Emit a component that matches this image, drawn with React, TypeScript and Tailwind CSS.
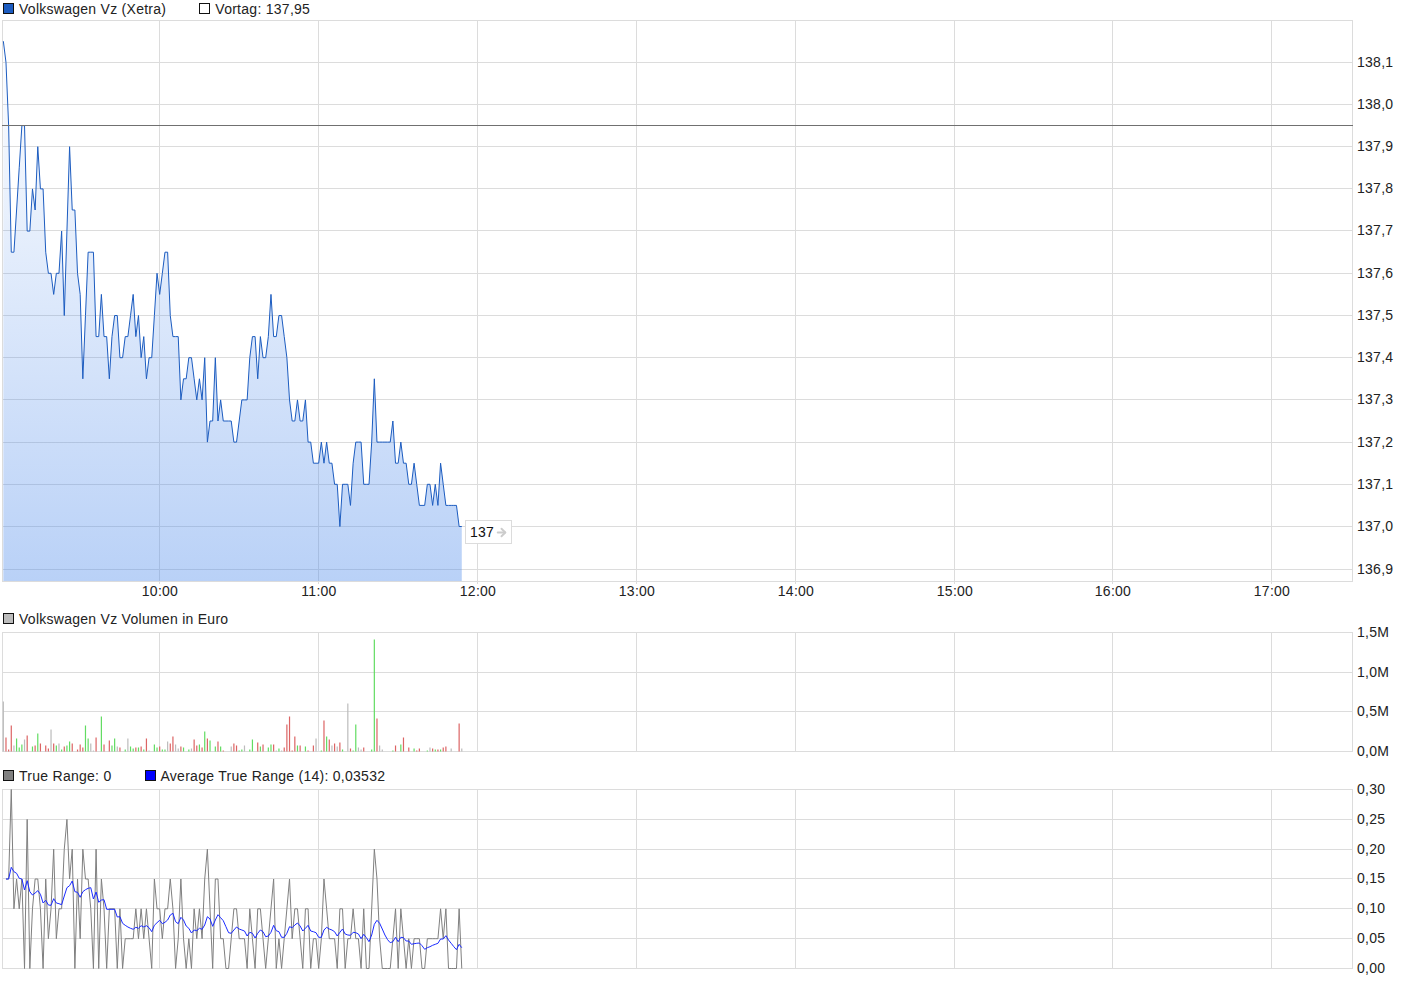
import { ArrowRight } from 'lucide-react'

const GRID_X = [159, 318, 477, 636, 795, 954, 1112, 1271]
const HOURS = ['10:00', '11:00', '12:00', '13:00', '14:00', '15:00', '16:00', '17:00']
const LEFT = 2
const RIGHT = 1352

// one sample per minute, 2.65px apart
const xAt = (i: number) => 3.33 + 2.65 * i

// price in steps of 0.05 above 137,00
const PRICE = [
  23, 22, 19, 13, 13, 15, 17, 19, 19, 14, 14, 16, 15, 18, 16, 16, 13, 12, 12, 11,
  12, 12, 14, 10, 14, 18, 15, 15, 12, 11, 7, 10, 13, 13, 13, 9, 9, 11, 9, 9,
  7, 9, 10, 10, 8, 8, 9, 9, 10, 11, 9, 10, 8, 9, 7, 8, 8, 10, 12, 11,
  12, 13, 13, 10, 9, 9, 9, 6, 7, 7, 8, 8, 7, 6, 7, 6, 8, 4, 5, 5,
  8, 5, 6, 5, 5, 5, 5, 4, 4, 5, 6, 6, 6, 8, 9, 9, 7, 9, 8, 8,
  9, 11, 9, 9, 10, 10, 9, 8, 6, 5, 5, 6, 5, 5, 6, 4, 4, 3, 3, 3,
  4, 3, 4, 3, 3, 2, 2, 0, 2, 2, 2, 1, 3, 4, 4, 4, 2, 2, 2, 4,
  7, 4, 4, 4, 4, 4, 4, 5, 3, 3, 4, 3, 3, 2, 2, 3, 2, 1, 1, 1,
  2, 2, 1, 2, 1, 3, 2, 1, 1, 1, 1, 1, 0, 0,
]

// bar height in px + colour key, 0 = no trade
const VOLUME =
  '50s 14r 2r 26r 6s 13g 4g 7g 12s 16r 0 5g 6r 18g 8r 0 6r 3r 22s 8r 6g 8s 2g 5r 6g 10g 8r 0 2r 7r 4r 26g 13g 8s 1s 14r 0 35g 7r 0 11r 6g 13g 5s 4r 0 2g 13s 5g 3g 4r 4g 5r 2g 13r 1s 0 7g 4g 5r 2g 2g 10s 8r 15r 7s 3s 5r 4g 0 2g 3s 12r 6r 7g 4r 20g 13r 11g 0 5g 10r 5g 1r 0 0 5s 8r 6r 1g ' +
  '2g 6s 0 2g 12g 0 9r 5g 7r 0 4g 7g 7r 1s 3g 1s 4r 27r 35r 1r 15r 6g 6r 0 5g 1r 0 6r 13s 0 1g 31r 15g 12r 6s 8r 5s 9r 2g 0 48s 3r 1g 27g 4s 2s 4r 0 0 2g 112g 33r 6s 2s 0 0 0 1g 6r 0 7g 14r 0 4r 0 3g 1r 3r 0 0 1g 4s 3r 2g 2r 2g 4r 5r 0 3s 0 0 28r 3s'

const BAR_COLORS: Record<string, string> = { r: '#dc6464', g: '#62dc62', s: '#bcbcbc' }

// true range in steps of 0.05, starts at the second sample
const TRUE_RANGE = [
  3, 3, 6, 2, 3, 2, 3, 0, 5, 0, 2, 3, 3, 2, 0, 3, 1, 2, 4, 1, 2, 2, 4, 5, 3, 4, 0, 3, 1, 4,
  3, 3, 2, 0, 4, 0, 3, 2, 0, 2, 2, 2, 0, 2, 0, 1, 1, 1, 1, 2, 1, 2, 1, 2, 1, 0, 3, 2, 2, 1,
  2, 2, 3, 2, 0, 1, 3, 1, 0, 1, 0, 2, 1, 2, 1, 3, 4, 2, 0, 3, 3, 1, 1, 0, 0, 1, 2, 2, 1, 1,
  1, 0, 2, 1, 0, 2, 2, 1, 0, 1, 2, 3, 0, 1, 0, 1, 2, 3, 1, 2, 2, 1, 0, 2, 2, 0, 1, 1, 0, 1,
  3, 2, 1, 1, 1, 0, 2, 2, 0, 1, 1, 2, 1, 1, 0, 2, 0, 0, 2, 4, 3, 1, 0, 0, 0, 0, 1, 2, 0, 2,
  1, 0, 1, 0, 1, 1, 1, 0, 0, 1, 1, 1, 1, 1, 2, 1, 2, 0, 0, 0, 0, 2, 0,
]

// average true range as page y, starts at the second sample
const ATR = [
  342, 342, 307, 320, 325, 340, 342, 375, 347, 380, 390, 384, 377, 388, 414, 406, 420, 421, 401, 414,
  416, 419, 393, 368, 362, 348, 380, 382, 397, 380, 374, 370, 368, 402, 381, 412, 405, 404, 433, 433,
  433, 433, 456, 455, 475, 481, 486, 490, 493, 487, 490, 482, 486, 482, 488, 500, 481, 473, 466, 476,
  472, 465, 450, 445, 470, 476, 457, 465, 483, 490, 504, 495, 497, 490, 493, 480, 455, 462, 484, 465,
  449, 458, 467, 485, 503, 505, 495, 486, 492, 495, 498, 513, 502, 505, 519, 505, 495, 500, 515, 513,
  502, 481, 497, 500, 517, 517, 505, 485, 488, 480, 474, 483, 498, 490, 481, 498, 500, 503, 517, 517,
  495, 487, 492, 495, 500, 513, 502, 492, 507, 510, 511, 502, 503, 507, 521, 508, 518, 530, 510, 478,
  466, 475, 492, 510, 524, 533, 530, 517, 530, 517, 518, 528, 528, 538, 536, 535, 534, 542, 553, 548,
  545, 541, 538, 535, 522, 522, 512, 525, 535, 545, 554, 538, 548,
].map((v) => 765 + v / 3)

const MAIN_LINES = [
  { y: 62, label: '138,1' },
  { y: 104, label: '138,0' },
  { y: 146, label: '137,9' },
  { y: 188, label: '137,8' },
  { y: 230, label: '137,7' },
  { y: 273, label: '137,6' },
  { y: 315, label: '137,5' },
  { y: 357, label: '137,4' },
  { y: 399, label: '137,3' },
  { y: 442, label: '137,2' },
  { y: 484, label: '137,1' },
  { y: 526, label: '137,0' },
  { y: 569, label: '136,9' },
]

const VOLUME_LINES = [
  { y: 632, label: '1,5M' },
  { y: 672, label: '1,0M' },
  { y: 711, label: '0,5M' },
  { y: 751, label: '0,0M' },
]

const RANGE_LINES = [
  { y: 789, label: '0,30' },
  { y: 819, label: '0,25' },
  { y: 849, label: '0,20' },
  { y: 878, label: '0,15' },
  { y: 908, label: '0,10' },
  { y: 938, label: '0,05' },
  { y: 968, label: '0,00' },
]

const priceY = (l: number) => 526.5 - l * 21.1
const pricePoints = PRICE.map((l, i) => `${xAt(i).toFixed(2)},${priceY(l).toFixed(1)}`).join(' ')
const areaPoints = `${xAt(0)},581 ${pricePoints} ${xAt(PRICE.length - 1).toFixed(2)},581`
const rangePoints = TRUE_RANGE.map((l, i) => `${xAt(i + 1).toFixed(2)},${(968.5 - l * 29.83).toFixed(1)}`).join(' ')
const atrPoints = ATR.map((y, i) => `${xAt(i + 1).toFixed(2)},${y.toFixed(1)}`).join(' ')

function Legend({ color, label, className }: { color: string; label: string; className?: string }) {
  return (
    <div className={`flex items-center gap-[5px] ${className ?? ''}`}>
      <span className="w-[11px] h-[11px] border border-[#111]" style={{ backgroundColor: color }} />
      <span className="pt-[1px]">{label}</span>
    </div>
  )
}

function Grid({ lines, top, bottom }: { lines: { y: number; label: string }[]; top: number; bottom: number }) {
  return (
    <g>
      {lines.map((l) => (
        <line key={l.y} x1={LEFT} x2={RIGHT + 1} y1={l.y + 0.5} y2={l.y + 0.5} stroke="#dcdcdc" />
      ))}
      {[LEFT, ...GRID_X, RIGHT].map((x) => (
        <line key={x} x1={x + 0.5} x2={x + 0.5} y1={top} y2={bottom + 1} stroke="#dcdcdc" />
      ))}
      {lines.map((l) => (
        <text key={l.y} x={1357} y={l.y + 5} fill="#222">
          {l.label}
        </text>
      ))}
    </g>
  )
}

export default function App() {
  return (
    <div className="w-[1410px] h-[983px] overflow-hidden bg-white text-[14px] tracking-[0.27px] leading-none text-[#222] font-['Liberation_Sans',Arial,sans-serif]">
      <div className="flex items-center h-[17px] mb-[3px] pl-[3px]">
        <Legend color="#1c5cc0" label="Volkswagen Vz (Xetra)" />
        <Legend color="#ffffff" label="Vortag: 137,95" className="ml-[33px]" />
      </div>

      <div className="relative">
        <svg width={1410} height={590} viewBox="0 20 1410 590" className="block">
          <defs>
            <linearGradient id="area" gradientUnits="userSpaceOnUse" x1="0" y1="33" x2="0" y2="581">
              <stop offset="0" stopColor="#508ceb" stopOpacity={0} />
              <stop offset="1" stopColor="#508ceb" stopOpacity={0.4} />
            </linearGradient>
          </defs>
          <Grid lines={[{ y: 20, label: '' }, { y: 581, label: '' }, ...MAIN_LINES]} top={20} bottom={581} />
          {GRID_X.map((x) => (
            <line key={x} x1={x + 0.5} x2={x + 0.5} y1={581} y2={584} stroke="#dcdcdc" />
          ))}
          <polygon points={areaPoints} fill="url(#area)" />
          <polyline points={pricePoints} fill="none" stroke="#1c5cc0" strokeWidth={1} />
          <line x1={LEFT} x2={RIGHT + 1} y1={125.5} y2={125.5} stroke="#707070" />
          {GRID_X.map((x, i) => (
            <text key={x} x={x + 1} y={596} textAnchor="middle" fill="#222">
              {HOURS[i]}
            </text>
          ))}
        </svg>
        <div className="absolute left-[465px] top-[500px] w-[47px] h-[24px] flex items-center gap-[1px] pl-[4px] bg-white border border-[#dcdcdc] text-[#111]">
          137
          <ArrowRight size={13} strokeWidth={3.5} color="#cccccc" />
        </div>
      </div>

      <div className="flex items-center h-[17px] pl-[3px]">
        <Legend color="#bcbcbc" label="Volkswagen Vz Volumen in Euro" />
      </div>
      <svg width={1410} height={140} viewBox="0 627 1410 140" className="block overflow-visible">
        <Grid lines={VOLUME_LINES} top={632} bottom={751} />
        {VOLUME.split(' ').map((bar, i) => {
          const h = parseInt(bar)
          if (!h) return null
          return <rect key={i} x={xAt(i) - 0.6} y={751.5 - h} width={1.2} height={h} fill={BAR_COLORS[bar.slice(-1)]} />
        })}
      </svg>

      <div className="flex items-center h-[17px] pl-[3px]">
        <Legend color="#808080" label="True Range: 0" />
        <Legend color="#0000ff" label="Average True Range (14): 0,03532" className="ml-[33px]" />
      </div>
      <svg width={1410} height={199} viewBox="0 784 1410 199" className="block overflow-visible">
        <Grid lines={RANGE_LINES} top={789} bottom={968} />
        <polyline points={rangePoints} fill="none" stroke="#808080" strokeWidth={1} />
        <polyline points={atrPoints} fill="none" stroke="#1a2bff" strokeWidth={1} />
      </svg>
    </div>
  )
}
